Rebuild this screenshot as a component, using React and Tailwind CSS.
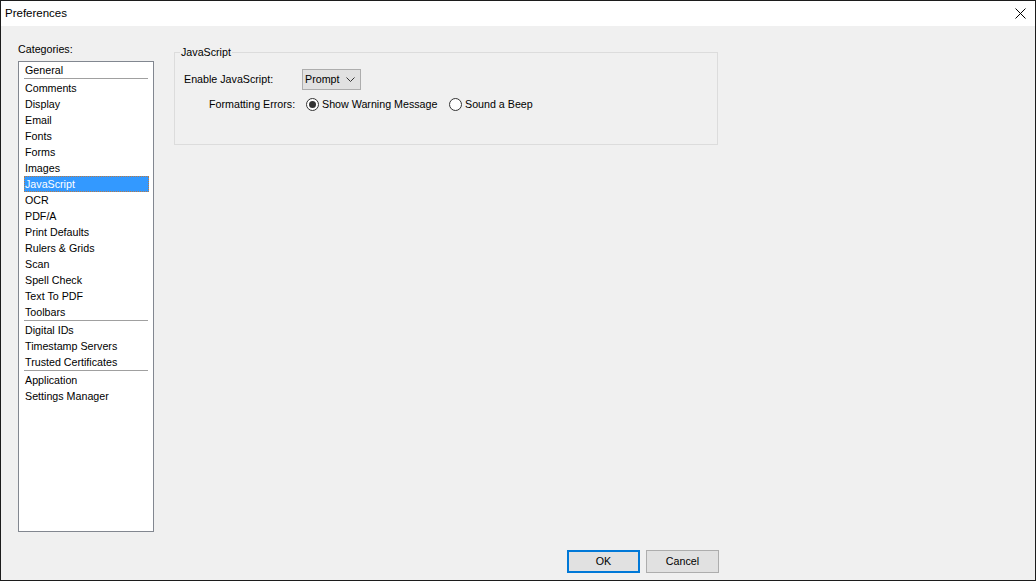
import React from 'react'

const groups = [
  ['General'],
  ['Comments', 'Display', 'Email', 'Fonts', 'Forms', 'Images', 'JavaScript', 'OCR', 'PDF/A', 'Print Defaults', 'Rulers & Grids', 'Scan', 'Spell Check', 'Text To PDF', 'Toolbars'],
  ['Digital IDs', 'Timestamp Servers', 'Trusted Certificates'],
  ['Application', 'Settings Manager'],
]

function Radio({ checked, label }) {
  return (
    <span className="flex items-center gap-[3px]">
      <span className="flex h-[13px] w-[13px] items-center justify-center rounded-full border border-[#333] bg-white">
        {checked ? <span className="h-[7px] w-[7px] rounded-full bg-[#333]" /> : null}
      </span>
      <span>{label}</span>
    </span>
  )
}

export default function App() {
  return (
    <div className="flex h-[581px] w-[1036px] flex-col border border-[#1c1c1c] bg-[#f0f0f0] font-['Liberation_Sans',Arial,sans-serif] text-[10.7px] text-black">
      {/* title bar */}
      <div className="flex h-[25px] items-center justify-between bg-white pl-[4px] pr-[9px]">
        <span className="text-[11.5px]">Preferences</span>
        <svg width="11" height="11" viewBox="0 0 11 11" className="text-black">
          <path d="M0.5 0.5 L10.5 10.5 M10.5 0.5 L0.5 10.5" stroke="currentColor" strokeWidth="1" fill="none" />
        </svg>
      </div>

      <div className="flex flex-1 pl-[17px] pt-[16px]">
        {/* categories */}
        <div className="flex w-[136px] flex-col">
          <div className="h-[14px] leading-[14px]">Categories:</div>
          <div className="mt-[5px] h-[471px] border border-[#828790] bg-white">
            {groups.map((items, gi) => (
              <div key={gi}>
                {gi > 0 ? <div className="mx-[5px] h-[2px] border-t border-[#a0a0a0]" /> : null}
                {items.map((name) =>
                  name === 'JavaScript' ? (
                    <div
                      key={name}
                      className="mx-[5px] flex h-[16px] w-[125px] items-center border border-dotted border-[#b87a45] bg-[#3399ff] text-white"
                    >
                      {name}
                    </div>
                  ) : (
                    <div key={name} className="mx-[5px] flex h-[16px] w-[125px] items-center pl-[1px]">
                      {name}
                    </div>
                  )
                )}
              </div>
            ))}
          </div>
        </div>

        {/* settings */}
        <div className="ml-[20px] flex w-[545px] flex-col">
          <fieldset className="mt-[3px] h-[100px] w-[544px] border border-[#dcdcdc]">
            <legend className="ml-[5px] h-[14px] px-[1px] leading-[14px]">JavaScript</legend>
            <div className="mt-[10px] flex items-center pl-[9px]">
              <span className="w-[118px]">Enable JavaScript:</span>
              <div className="flex h-[21px] w-[59px] items-center justify-between border border-[#adadad] bg-[#e1e1e1] pl-[2px] pr-[5px]">
                <span>Prompt</span>
                <svg width="9" height="5" viewBox="0 0 9 5">
                  <path d="M0.5 0.5 L4.5 4.5 L8.5 0.5" stroke="#333" strokeWidth="1" fill="none" />
                </svg>
              </div>
            </div>
            <div className="mt-[8px] flex h-[13px] items-center pl-[34px]">
              <span className="w-[97px]">Formatting Errors:</span>
              <div className="w-[143px]">
                <Radio checked label="Show Warning Message" />
              </div>
              <Radio label="Sound a Beep" />
            </div>
          </fieldset>

          <div className="mb-[7px] mt-auto flex justify-end gap-[6px]">
            <button className="h-[23px] w-[73px] border-2 border-[#0078d7] bg-[#e1e1e1]">OK</button>
            <button className="h-[23px] w-[73px] border border-[#adadad] bg-[#e1e1e1]">Cancel</button>
          </div>
        </div>
      </div>
    </div>
  )
}
